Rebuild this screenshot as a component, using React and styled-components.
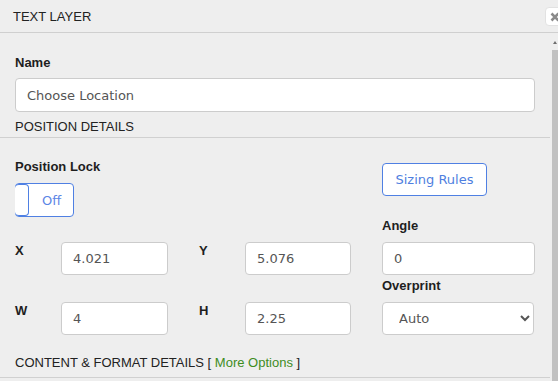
import React from "react";
import styled, { createGlobalStyle } from "styled-components";

const GlobalStyle = createGlobalStyle`
  html, body {
    margin: 0;
    padding: 0;
    overflow: hidden;
    background: #eeeeee;
  }
`;

const App = () => {
  return (
    <>
      <GlobalStyle />
      <Panel>
        <Header>
          <Title>TEXT LAYER</Title>
          <CloseButton aria-label="close">
            <svg width="10" height="10" viewBox="0 0 10 10">
              <path d="M1.5 1.5 L8.5 8.5 M8.5 1.5 L1.5 8.5" stroke="#8a8a8a" strokeWidth="2.6" />
            </svg>
          </CloseButton>
        </Header>
        <Body>
          <Content>
            <Label>Name</Label>
            <NameInput defaultValue="Choose Location" />

            <SectionHeader>POSITION DETAILS</SectionHeader>
            <Section>
              <TopRow>
                <LockGroup>
                  <Label>Position Lock</Label>
                  <Toggle>
                    <Knob />
                    <ToggleText>Off</ToggleText>
                  </Toggle>
                </LockGroup>
                <OutlineButton>Sizing Rules</OutlineButton>
              </TopRow>

              <FieldRow>
                <Pair>
                  <AxisLabel>X</AxisLabel>
                  <SmallInput defaultValue="4.021" />
                </Pair>
                <Pair>
                  <AxisLabel>Y</AxisLabel>
                  <SmallInput $w={106} defaultValue="5.076" />
                </Pair>
                <Stack>
                  <Label>Angle</Label>
                  <WideInput defaultValue="0" />
                </Stack>
              </FieldRow>

              <FieldRow $top={3}>
                <Pair>
                  <AxisLabel>W</AxisLabel>
                  <SmallInput defaultValue="4" />
                </Pair>
                <Pair>
                  <AxisLabel>H</AxisLabel>
                  <SmallInput $w={106} defaultValue="2.25" />
                </Pair>
                <Stack>
                  <Label>Overprint</Label>
                  <Select defaultValue="auto">
                    <option value="auto">Auto</option>
                    <option value="on">On</option>
                    <option value="off">Off</option>
                  </Select>
                </Stack>
              </FieldRow>
            </Section>

            <SectionHeader $top={20} $bottom={6}>
              CONTENT &amp; FORMAT DETAILS [ <MoreLink>More Options</MoreLink> ]
            </SectionHeader>
          </Content>
          <ScrollRail>
            <ScrollArrow />
            <ScrollThumb />
          </ScrollRail>
        </Body>
      </Panel>
    </>
  );
};

export default App;

const Panel = styled.div`
  width: 558px;
  height: 381px;
  display: flex;
  flex-direction: column;
  background: #eeeeee;
  font-family: "Liberation Sans", Arial, sans-serif;
  color: #222;
`;

const Header = styled.div`
  display: flex;
  align-items: flex-start;
  justify-content: space-between;
  height: 32px;
  flex-shrink: 0;
  border-bottom: 1px solid #cfcfcf;
  overflow: hidden;
`;

const Title = styled.div`
  font-size: 13px;
  line-height: 16px;
  padding: 9px 0 0 13px;
  color: #222;
`;

const CloseButton = styled.button`
  display: flex;
  align-items: center;
  justify-content: center;
  width: 20px;
  height: 19px;
  margin: 7px -7px 0 0;
  padding: 0;
  border: 1px solid #e2e2e2;
  border-radius: 4px;
  background: #fff;
`;

const Body = styled.div`
  flex: 1;
  display: flex;
  overflow: hidden;
`;

const Content = styled.div`
  flex: 1;
  min-width: 0;
  padding: 22px 17px 0 15px;
`;

const ScrollRail = styled.div`
  width: 6px;
  display: flex;
  flex-direction: column;
  align-items: center;
  background: #eeeeee;
`;

const ScrollArrow = styled.div`
  width: 0;
  height: 0;
  margin: 8px 0 6px;
  border-left: 2px solid transparent;
  border-right: 2px solid transparent;
  border-bottom: 3px solid #6e6e6e;
`;

const ScrollThumb = styled.div`
  flex: 1;
  align-self: stretch;
  background: #c1c1c1;
`;

const Label = styled.div`
  font-size: 13px;
  line-height: 16px;
  font-weight: bold;
  color: #1e1e1e;
  margin-bottom: 8px;
`;

const inputBase = `
  box-sizing: border-box;
  border: 1px solid #cccccc;
  border-radius: 4px;
  background: #ffffff;
  padding: 0 11px;
  font-family: "DejaVu Sans", Verdana, sans-serif;
  font-size: 13px;
  color: #555;
  outline: none;
`;

const NameInput = styled.input`
  ${inputBase}
  display: block;
  width: 100%;
  height: 34px;
  margin-top: -1px;
`;

const SectionHeader = styled.div`
  margin: ${(p) => p.$top ?? 7}px -15px 0 -15px;
  padding: 0 0 ${(p) => p.$bottom ?? 2}px 15px;
  font-size: 13px;
  line-height: 16px;
  color: #222;
  border-bottom: 1px solid #d0d0d0;
`;

const MoreLink = styled.span`
  color: #3e8c1e;
`;

const Section = styled.div`
  padding-top: 21px;
`;

const TopRow = styled.div`
  display: flex;
  align-items: flex-start;
  justify-content: space-between;
  padding-right: 48px;
`;

const LockGroup = styled.div`
  display: flex;
  flex-direction: column;
  align-items: flex-start;
`;

const Toggle = styled.div`
  box-sizing: border-box;
  display: flex;
  align-items: center;
  width: 59px;
  height: 34px;
  border: 1px solid #4f80e3;
  border-radius: 4px;
  background: #fff;
`;

const Knob = styled.div`
  box-sizing: border-box;
  width: 14px;
  height: 32px;
  margin-left: -1px;
  border: 1px solid #4f80e3;
  border-left: none;
  border-radius: 4px;
  background: #fff;
`;

const ToggleText = styled.span`
  margin-left: 13px;
  font-family: "DejaVu Sans", Verdana, sans-serif;
  font-size: 13px;
  color: #5c86e6;
`;

const OutlineButton = styled.button`
  box-sizing: border-box;
  width: 105px;
  height: 33px;
  margin-top: 4px;
  padding: 0;
  border: 1px solid #4f80e3;
  border-radius: 4px;
  background: #fff;
  font-family: "DejaVu Sans", Verdana, sans-serif;
  font-size: 13px;
  color: #4f7fe0;
`;

const FieldRow = styled.div`
  display: flex;
  align-items: flex-end;
  gap: 31px;
  margin-top: ${(p) => p.$top ?? 1}px;
`;

const Pair = styled.div`
  display: flex;
  align-items: flex-start;
`;

const AxisLabel = styled.div`
  width: 46px;
  padding-top: 1px;
  font-size: 13px;
  line-height: 16px;
  font-weight: bold;
  color: #1e1e1e;
`;

const SmallInput = styled.input`
  ${inputBase}
  width: ${(p) => p.$w ?? 107}px;
  height: 33px;
`;

const Stack = styled.div`
  display: flex;
  flex-direction: column;
  width: 153px;
`;

const WideInput = styled.input`
  ${inputBase}
  width: 153px;
  height: 33px;
`;

const Select = styled.select`
  ${inputBase}
  width: 152px;
  height: 33px;
  padding: 0 8px 0 12px;
`;
